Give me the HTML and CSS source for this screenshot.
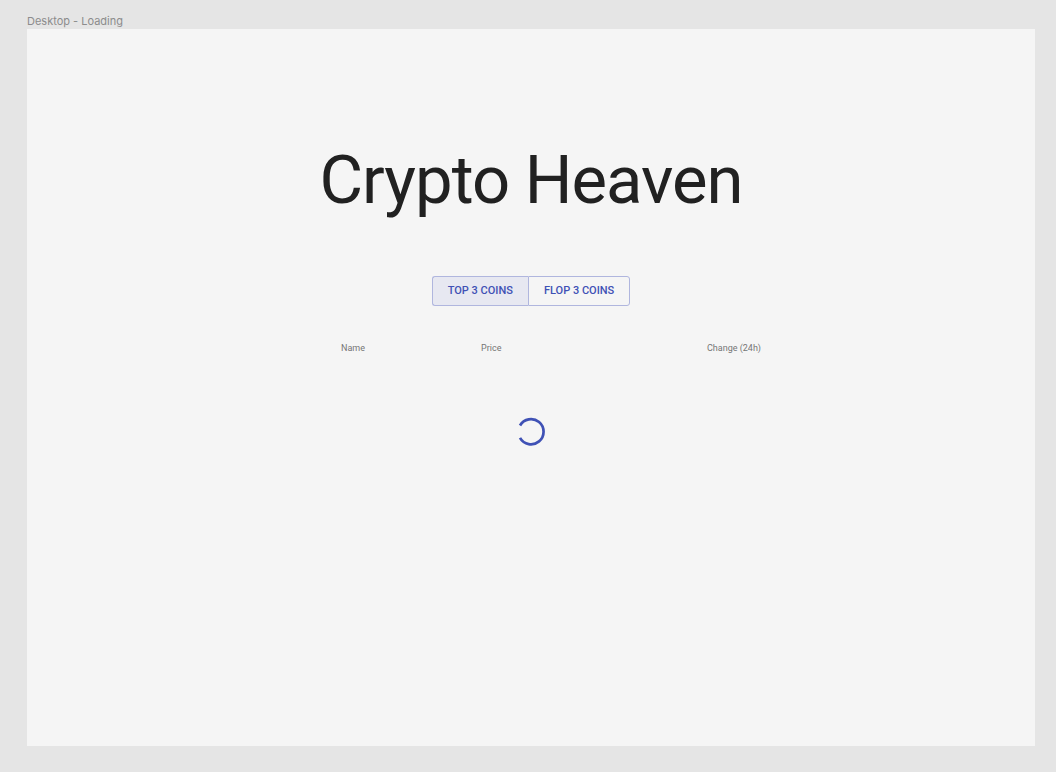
FILE: index.html
```html
<!DOCTYPE html>
<html lang="en">
<head>
<meta charset="utf-8">
<title>Crypto Heaven</title>
<link rel="stylesheet" href="styles.css">
</head>
<body>
<div class="canvas">
  <div class="frame-label">Desktop - Loading</div>
  <main class="frame">
    <h1 class="title">Crypto Heaven</h1>
    <div class="button-group" role="group" aria-label="Coin list">
      <button class="group-button group-button-active" type="button" aria-pressed="true">Top 3 coins</button>
      <button class="group-button" type="button" aria-pressed="false">Flop 3 coins</button>
    </div>
    <table class="coins">
      <thead>
        <tr>
          <th class="col-name" scope="col">Name</th>
          <th class="col-price" scope="col">Price</th>
          <th class="col-change" scope="col">Change (24h)</th>
        </tr>
      </thead>
    </table>
    <svg class="spinner" viewBox="0 0 28 28" role="img" aria-label="Loading">
      <path d="M3 7.5A12.6 12.6 0 1 1 3 19.9" fill="none" stroke="#3f51b5" stroke-width="2.7"/>
    </svg>
  </main>
</div>
</body>
</html>
```

FILE: styles.css
```css
* {
  box-sizing: border-box;
}

body {
  margin: 0;
  background: #e5e5e5;
  font-family: Roboto, "Liberation Sans", sans-serif;
}

.canvas {
  display: flex;
  flex-direction: column;
  min-height: 100vh;
  padding: 14px 21px 26px 27px;
}

.frame-label {
  color: #8c8c8c;
  font-family: Inter, sans-serif;
  font-size: 11px;
  line-height: 15px;
}

.frame {
  display: flex;
  flex: 1;
  flex-direction: column;
  align-items: center;
  padding: 112px 24px 24px;
  background: #f5f5f5;
}

.title {
  margin: 0;
  color: #212121;
  font-size: 67px;
  font-weight: 400;
  line-height: 78px;
  letter-spacing: -1px;
}

.button-group {
  display: flex;
  margin-top: 57px;
}

.group-button {
  height: 30px;
  padding: 0 15px 2px;
  border: 1px solid #b0b6de;
  border-radius: 0 3px 3px 0;
  background: transparent;
  color: #3f51b5;
  font-family: inherit;
  font-size: 11px;
  font-weight: 500;
  text-transform: uppercase;
}

.group-button-active {
  border-right: 0;
  border-radius: 3px 0 0 3px;
  background: #e7e8f1;
}

.coins {
  width: 100%;
  max-width: 460px;
  margin-top: 35px;
  border-collapse: collapse;
  table-layout: fixed;
  color: #757575;
  font-size: 9px;
  line-height: 14px;
}

.coins th {
  padding: 0;
  font-weight: 400;
  text-align: left;
}

.coins .col-name {
  width: 180px;
  padding-left: 40px;
}

.coins .col-change {
  text-align: right;
}

.spinner {
  width: 28px;
  height: 28px;
  margin-top: 63px;
  overflow: visible;
}
```
